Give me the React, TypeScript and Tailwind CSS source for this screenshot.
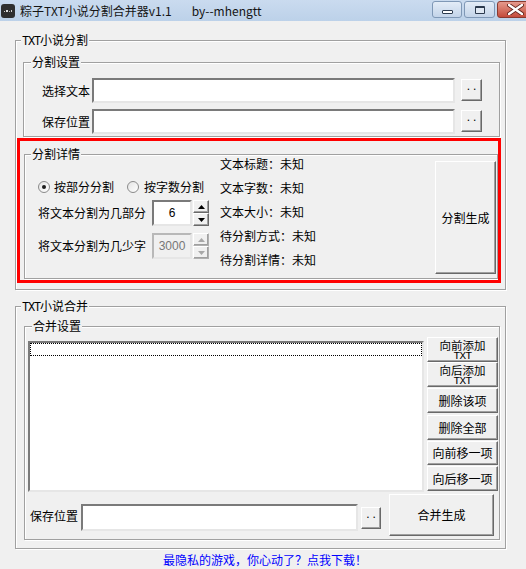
import type { ReactNode } from 'react'

// 窗体里的分组框，标题压在上边框上
function Group({ label, className, labelClass, children }: { label: ReactNode; className: string; labelClass: string; children?: ReactNode }) {
  return (
    <div className={`relative shrink-0 border border-[#a0a0a0] shadow-[inset_1px_1px_0_#fff,1px_1px_0_#fff] ${className}`}>
      <span className={`absolute top-[-9px] bg-[#f0f0f0] px-[1px] text-[12px] leading-[16px] whitespace-nowrap ${labelClass}`}>{label}</span>
      {children}
    </div>
  )
}

function Field({ className, children }: { className: string; children?: ReactNode }) {
  return (
    <div className={`shrink-0 border-2 border-t-[#7a7a7a] border-l-[#7a7a7a] border-b-[#e6e6e6] border-r-[#e6e6e6] ${className}`}>
      {children}
    </div>
  )
}

function Btn({ className, children }: { className: string; children?: ReactNode }) {
  return (
    <div className={`flex shrink-0 flex-col items-center justify-center border border-t-white border-l-white border-b-[#696969] border-r-[#696969] bg-[#f0f0f0] shadow-[inset_-1px_-1px_0_#a0a0a0] text-[12px] text-black ${className}`}>
      {children}
    </div>
  )
}

function Dots({ className }: { className: string }) {
  return (
    <Btn className={className}>
      <span className="-mt-[9px] pl-[3px] text-[12px] leading-[12px] tracking-[3px] [font-family:'Liberation_Sans',sans-serif]">..</span>
    </Btn>
  )
}

function Txt({ className = 'text-[12px] tracking-[-1.2px]' }: { className?: string }) {
  return <span className={`[font-family:'Liberation_Mono',monospace] ${className}`}>TXT</span>
}

function Radio({ checked }: { checked?: boolean }) {
  return (
    <div className="flex h-[12px] w-[12px] shrink-0 items-center justify-center rounded-full border border-[#8a8a8a] bg-linear-to-br from-[#e4e4e4] to-white">
      {checked && <div className="h-[4px] w-[4px] rounded-full bg-[#1c1c1c]" />}
    </div>
  )
}

function Arrow({ up, color }: { up?: boolean; color: string }) {
  return (
    <svg width="7" height="4" viewBox="0 0 7 4">
      <polygon points={up ? '3.5,0 7,4 0,4' : '0,0 7,0 3.5,4'} fill={color} />
    </svg>
  )
}

function Spin({ value, disabled }: { value: string; disabled?: boolean }) {
  const c = disabled ? '#a8a8a8' : '#000'
  return (
    <div className="flex items-start">
      <Field className={`flex h-[26px] w-[40px] items-center justify-center ${disabled ? 'bg-[#f0f0f0] !border-t-[#b8b8b8] !border-l-[#b8b8b8]' : 'bg-white'}`}>
        <span className={`leading-[16px] [font-family:'Liberation_Sans',sans-serif] ${disabled ? 'text-[#777]' : 'text-black'}`}>{value}</span>
      </Field>
      <div className="ml-[1px] flex w-[16px] flex-col">
        <Btn className={`h-[13px] w-[16px] ${disabled ? '!border-b-[#b0b0b0] !border-r-[#b0b0b0]' : ''}`}><Arrow up color={c} /></Btn>
        <Btn className={`h-[13px] w-[16px] ${disabled ? '!border-b-[#b0b0b0] !border-r-[#b0b0b0]' : ''}`}><Arrow color={c} /></Btn>
      </div>
    </div>
  )
}

export default function App() {
  const info = ['文本标题：未知', '文本字数：未知', '文本大小：未知', '待分割方式：未知', '待分割详情：未知']

  return (
    <div className="flex h-[569px] w-[526px] flex-col overflow-hidden bg-[#f0f0f0] text-[12px] text-black [font-family:'Noto_Sans_CJK_SC',sans-serif]">
      {/* 标题栏 */}
      <div className="flex h-[21px] shrink-0 overflow-hidden bg-linear-to-b from-[#cadbef] to-[#bcd1e9]">
        <div className="flex w-[432px] shrink-0 items-center">
          <svg className="ml-[1px] shrink-0" width="14" height="14" viewBox="0 0 14 14">
            <rect x="0" y="0" width="14" height="14" rx="3" fill="#2f2f2f" />
            <rect x="3" y="7" width="1" height="1" fill="#cfcfcf" />
            <rect x="5" y="6" width="2" height="2" fill="#e0e0e0" />
            <rect x="8" y="7" width="1" height="1" fill="#bdbdbd" />
            <rect x="10" y="6" width="1" height="2" fill="#d0d0d0" />
          </svg>
          <span className="ml-[5px] whitespace-nowrap leading-[16px] text-[#141414]">粽子TXT小说分割合并器v1.1</span>
          <span className="ml-[20px] whitespace-nowrap leading-[16px] text-[#141414]">by--mhengtt</span>
        </div>
        <div className="flex shrink-0 gap-[2px] pt-[1px]">
          <div className="flex h-[17px] w-[30px] shrink-0 items-end justify-center rounded-[3px] border border-[#7f98b6] bg-linear-to-b from-[#e3ecf7] to-[#c3d4e9] pb-[3px]">
            <div className="h-[4px] w-[11px] rounded-[1px] border border-[#2b3a4e] bg-white" />
          </div>
          <div className="flex h-[17px] w-[31px] shrink-0 items-center justify-center rounded-[3px] border border-[#7f98b6] bg-linear-to-b from-[#e3ecf7] to-[#c3d4e9]">
            <div className="h-[8px] w-[10px] rounded-[1px] border border-t-2 border-[#2b3a4e] bg-[#dfe8f3]" />
          </div>
          <div className="flex h-[17px] w-[37px] shrink-0 items-center justify-start rounded-[3px] border border-[#8a3a30] bg-linear-to-b from-[#e4998c] to-[#c44b3c] pl-[9px]">
            <svg width="17" height="11" viewBox="0 0 17 11">
              <path d="M2 1 L15 10 M15 1 L2 10" stroke="#5a1d16" strokeWidth="4" strokeLinecap="round" />
              <path d="M2 1 L15 10 M15 1 L2 10" stroke="#fff" strokeWidth="2.4" strokeLinecap="round" />
            </svg>
          </div>
        </div>
      </div>

      {/* TXT小说分割 */}
      <Group className="mt-[19px] ml-[15px] h-[250px] w-[491px]" labelClass="left-[5px]" label={<><Txt />小说分割</>}>
        <Group className="mt-[21px] ml-[7px] h-[75px] w-[477px]" labelClass="left-[7px]" label="分割设置">
          <div className="mt-[15px] flex items-start pl-[18px]">
            <span className="w-[50px] shrink-0 leading-[25px]">选择文本</span>
            <Field className="h-[25px] w-[363px] bg-white" />
            <Dots className="mt-[1px] ml-[6px] h-[22px] w-[21px]" />
          </div>
          <div className="mt-[6px] flex items-start pl-[18px]">
            <span className="w-[50px] shrink-0 leading-[25px]">保存位置</span>
            <Field className="h-[25px] w-[363px] bg-white" />
            <Dots className="mt-[1px] ml-[6px] h-[22px] w-[21px]" />
          </div>
        </Group>

        <Group className="mt-[17px] ml-[8px] h-[125px] w-[474px]" labelClass="left-[6px]" label="分割详情">
          <div className="flex items-start pl-[13px]">
            <div className="w-[182px] shrink-0 pt-[24px]">
              <div className="flex h-[16px] items-center">
                <Radio checked />
                <span className="ml-[4px] w-[60px] shrink-0 leading-[16px]">按部分分割</span>
                <div className="ml-[13px]"><Radio /></div>
                <span className="ml-[5px] shrink-0 leading-[16px]">按字数分割</span>
              </div>
              <div className="mt-[5px] flex items-start">
                <span className="w-[114px] shrink-0 leading-[26px]">将文本分割为几部分</span>
                <Spin value="6" />
              </div>
              <div className="mt-[7px] flex items-start">
                <span className="w-[114px] shrink-0 leading-[26px]">将文本分割为几少字</span>
                <Spin value="3000" disabled />
              </div>
            </div>
            <div className="-mt-[3px] flex w-[215px] shrink-0 flex-col">
              {info.map(t => (
                <span key={t} className="leading-[24px] whitespace-nowrap">{t}</span>
              ))}
            </div>
            <Btn className="mt-[6px] h-[113px] w-[61px]">分割生成</Btn>
          </div>
        </Group>

        {/* 红色标注框 */}
        <div className="absolute top-[97px] left-[1px] h-[145px] w-[484px] border-[3px] border-[#ff0000]" />
      </Group>

      {/* TXT小说合并 */}
      <Group className="mt-[16px] ml-[15px] h-[243px] w-[491px]" labelClass="left-[5px]" label={<><Txt />小说合并</>}>
        <Group className="mt-[19px] ml-[8px] h-[214px] w-[476px]" labelClass="left-[7px]" label="合并设置">
          <div className="flex items-start">
            <Field className="mt-[14px] ml-[3px] h-[151px] w-[396px] bg-white">
              <div className="h-[13px] border border-dotted border-black" />
            </Field>
            <div className="mt-[10px] ml-[3px] flex w-[71px] shrink-0 flex-col">
              <Btn className="h-[25px] w-[71px]">
                <span className="text-[11.5px] leading-[12px]">向前添加</span>
                <Txt className="mt-[1px] text-[11px] leading-[8px] tracking-[-0.6px]" />
              </Btn>
              <Btn className="h-[25px] w-[71px]">
                <span className="text-[11.5px] leading-[12px]">向后添加</span>
                <Txt className="mt-[1px] text-[11px] leading-[8px] tracking-[-0.6px]" />
              </Btn>
              <Btn className="mt-[1px] h-[25px] w-[71px]">删除该项</Btn>
              <Btn className="mt-[2px] h-[25px] w-[71px]">删除全部</Btn>
              <Btn className="mt-[1px] h-[24px] w-[71px]">向前移一项</Btn>
              <Btn className="mt-[1px] h-[25px] w-[71px]">向后移一项</Btn>
            </div>
          </div>
          <div className="mt-[2px] flex items-start pl-[5px]">
            <span className="mt-[14px] w-[51px] shrink-0 leading-[16px]">保存位置</span>
            <Field className="mt-[10px] h-[27px] w-[277px] bg-white" />
            <Dots className="mt-[13px] ml-[3px] h-[22px] w-[20px]" />
            <Btn className="ml-[8px] h-[42px] w-[105px]">合并生成</Btn>
          </div>
        </Group>
      </Group>

      <div className="mt-[3px] pl-[163px] leading-[16px] whitespace-nowrap text-[#0000ff]">最隐私的游戏，你心动了？点我下载！</div>
    </div>
  )
}
